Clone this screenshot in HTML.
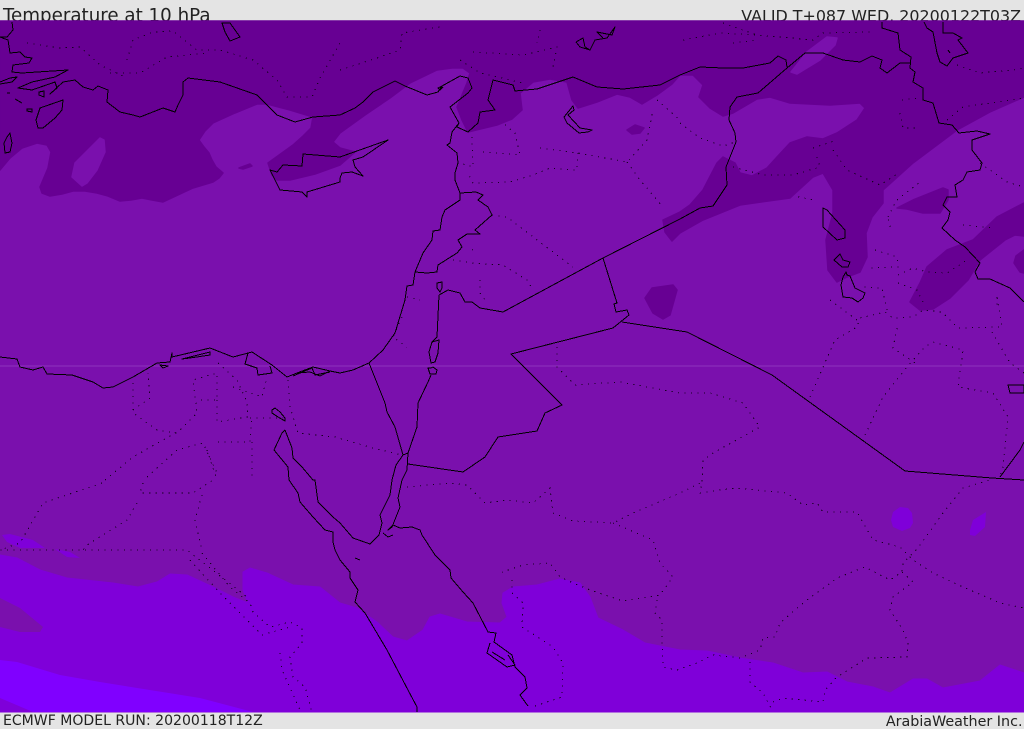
<!DOCTYPE html>
<html><head><meta charset="utf-8"><title>Temperature at 10 hPa</title>
<style>html,body{margin:0;padding:0;background:#e4e4e4;width:1024px;height:729px;overflow:hidden}svg{display:block}</style>
</head><body>
<svg width="1024" height="729" viewBox="0 0 1024 729" xmlns="http://www.w3.org/2000/svg">
<rect width="1024" height="729" fill="#e4e4e4"/>
<g font-family="'DejaVu Sans','Liberation Sans',sans-serif" fill="#222">
<text x="3" y="21.500" font-size="18.25">Temperature at 10 hPa</text>
<text x="1021" y="21.500" font-size="15.9" text-anchor="end">VALID T+087 WED. 20200122T03Z</text>
<text x="3" y="725" font-size="14.05">ECMWF MODEL RUN: 20200118T12Z</text>
<text x="1022.500" y="726" font-size="14.3" text-anchor="end">ArabiaWeather Inc.</text>
</g>
<rect x="0" y="21" width="1024" height="691" fill="#7a10ad"/>
<g fill="#670093" stroke="#670093" stroke-width="1.5" stroke-linejoin="round">
<path d="M0 170L10 158L22 148L37 143L47 145L51 152L48 168L40 187L42 193L50 196L62 194L73 191L85 191L97 193L108 196L120 201L131 200L142 198L152 200L163 202L178 195L193 188L213 182L219 178L223 173L216 167L212 160L209 153L204 147L199 140L205 131L213 123L235 113L257 104L267 104L290 110L313 117L311 128L303 136L293 145L268 163L272 175L277 180L290 180L315 174L340 165L355 152L340 148L333 142L340 133L365 115L390 98L410 83L437 70L452 68L463 68L470 73L467 83L457 107L462 120L468 132L497 125L512 119L522 110L520 93L533 82L550 79L567 82L572 100L578 108L597 102L617 94L630 97L642 104L657 95L672 84L680 75L693 75L703 85L699 97L710 108L723 116L733 113L757 99L770 97L790 103L830 105L860 103L865 108L857 120L837 133L823 139L807 137L790 143L777 157L767 168L752 176L740 173L735 163L723 157L717 163L703 190L690 205L680 212L663 220L665 232L672 241L680 233L703 220L740 205L790 198L813 177L823 173L833 190L833 213L826 240L828 270L837 282L847 277L860 272L867 257L866 233L872 217L883 203L883 190L913 163L957 130L990 112L1024 97L1024 21L0 21Z"/>
<path d="M897 208L913 200L943 188L948 190L948 200L940 213L923 213L907 209Z"/>
<path d="M910 302L920 283L927 267L947 250L973 240L997 217L1024 203L1024 236L1015 235L1005 240L980 260L968 280L950 298L933 309L920 310Z"/>
<path d="M1024 250L1016 256L1014 263L1020 272L1024 273Z"/>
<path d="M645 298L652 288L673 285L677 290L670 315L663 319L653 313Z"/>
<path d="M627 130L635 125L644 128L640 133L632 134Z"/>
<path d="M239 168L250 164L252 166L243 169Z"/>
</g>
<g fill="#7a10ad" stroke="#7a10ad" stroke-width="1.5" stroke-linejoin="round">
<path d="M100 138L104 140L105 152L97 170L87 183L82 186L72 177L75 163Z"/>
<path d="M791 72L807 52L827 37L837 38L835 45L820 60L797 74Z"/>
</g>
<path fill="#7f00d9" stroke="#7f00d9" stroke-linejoin="round" d="M0 555L17 558L40 570L67 578L113 583L138 587L157 582L170 574L187 575L213 587L233 597L248 603L243 590L243 572L250 568L267 573L293 585L320 587L340 603L357 608L377 622L393 637L407 641L423 630L430 617L440 614L467 622L500 623L507 617L502 603L503 593L513 587L537 585L560 579L580 583L590 597L598 618L623 630L645 643L680 650L707 651L740 658L773 663L803 673L827 672L847 682L873 687L890 693L913 679L927 679L943 688L980 681L1000 665L1024 673L1024 712L0 712Z"/>
<path fill="#7a10ad" d="M0 598L20 608L43 627L40 632L20 632L0 627Z"/>
<path fill="#8000ff" d="M0 660L17 662L60 675L100 682L200 698L253 712L33 712L0 698Z"/>
<g fill="#7f00d9">
<path d="M2 535L10 534L33 540L45 548L20 548L7 542Z"/>
<path d="M55 549L70 552L80 558L67 557Z"/>
<path d="M891 520L893 512L900 507L908 508L912 513L913 523L910 528L902 531L893 527Z"/>
<path d="M970 530L973 520L986 512L985 527L975 536L970 535Z"/>
</g>
<rect x="0" y="365.500" width="1024" height="1" fill="#8f33bd"/>
<g fill="none" stroke="#160020" stroke-width="1" stroke-dasharray="1.2 5.3" shape-rendering="crispEdges">
<path d="M27 43L60 48L80 47L100 65L127 78M127 60L133 40L153 32L173 31L197 50L220 50L253 60L277 80L287 97L312 97L320 78L340 43"/>
<path d="M110 73L140 73L167 57L207 53M340 70L380 57L400 50L402 33L440 27M473 52L523 55L557 47L553 67M460 60L480 73L523 83M540 30L537 43"/>
<path d="M683 40L720 33L757 35L780 37L813 40L823 33L870 32M733 43L757 40M723 23L757 35M957 65L980 73L1013 70L1024 68M902 100L920 98M900 113L903 128L920 128M947 120L963 107L1024 98"/>
<path d="M680 123L700 138L723 146L735 142M813 148L837 140M817 157L820 167M733 167L763 175L793 175L817 168M833 150L847 170L880 185L900 172M798 197L815 200M897 200L920 182M888 217L895 203M890 227L888 217M980 163L1007 182L1024 187M963 225L993 228"/>
<path d="M472 137L473 167L460 163M483 152L520 155L515 133L503 123M540 148L578 153L627 162L647 140L653 110M627 162L640 180L663 207M657 100L680 120M578 153L577 170L550 168L533 175L510 182L473 183L468 173"/>
<path d="M492 215L507 217L537 240L573 267M453 260L473 263L503 265L527 280L532 288M480 280L480 293L487 303M472 250L477 248M407 297L420 300M402 317L393 337L407 347"/>
<path d="M133 383L133 413L157 430L177 433L197 413L193 380L217 373L217 400L197 400M217 400L217 422L248 417L247 402L237 380L218 363M233 387L262 397L267 377M133 410L150 398L148 373M288 380L290 407L298 433L335 437L373 448L402 455M250 418L283 418"/>
<path d="M105 480L133 457L177 432M147 477L177 450L203 443L217 473M218 442L250 442L252 417M252 442L252 480M207 450L217 480M102 483L43 503L20 543L0 550L187 550L247 597M143 483L140 493L193 493L213 480M137 503L127 520L87 545L83 550M202 495L195 520L202 550M202 553L230 587L250 603L253 612L270 627L290 622L302 628L302 643L290 657L293 677L305 687L312 712M190 560L220 593L247 620L262 635L290 627M280 653L282 670L300 710"/>
<path d="M557 347L557 367L575 385L620 382L680 393L710 393L743 403L760 427L713 453L703 460L702 480L700 493L735 488L787 493L803 505L817 503L823 512L857 512L873 540L900 547L913 560L933 573L963 587L1000 603L1024 608"/>
<path d="M407 487L450 483L467 485L485 503L507 500L533 503L550 488L553 513L573 521L613 523L633 513L680 493L700 483M613 523L653 540L660 563L673 577L660 595L623 601L590 590L573 583L560 577L550 563L523 565L502 572M512 580L512 593L523 603L522 627L553 647L563 663L562 697L532 707M657 600L655 613L662 620L662 643L663 667L677 670L697 663L713 655L740 658L760 650L763 638L775 637L780 623L803 603L837 578L865 567L890 580L902 572L903 563L918 548L943 513L963 488L990 480"/>
<path d="M750 662L750 682L763 693L772 710M773 702L783 698L823 702L825 690L837 677L867 658L907 657L908 643L903 630L890 610L893 597L913 582L902 572"/>
<path d="M810 397L823 367L835 340L857 327L860 318L885 312L893 318L913 317L923 310L942 312L958 328L1002 327L997 297M865 435L883 397L907 367L925 347L933 342L963 350L958 387L993 393L1008 417L1003 467L1000 476M897 328L893 348L908 358L918 365M992 332L1010 363L1024 373M887 310L882 288L862 287M830 300L857 320M875 250L897 257L898 267L870 268M898 275L913 268L927 272L947 273L967 260M898 283L917 290L923 302M997 297L997 310"/>
</g>
<g fill="none" stroke="#000" stroke-width="1" stroke-linejoin="round" shape-rendering="crispEdges">
<path d="M12 22L13 30L7 37L0 37L8 40L10 53L20 52L25 57L32 58L29 63L13 65L12 72L22 73L68 70L55 77L32 82L18 88L32 90L55 82L57 88L50 94L63 82L75 80L83 87L93 90L98 86L108 90L107 102L120 112L133 115L140 117L163 108L175 112L178 105L183 95L183 82L188 78L220 82L257 95L267 105L277 115L295 122L313 117L340 115L355 108L363 102L373 92L395 81L405 86L427 95L438 92L442 86L460 76L468 78L472 88L468 93L450 107L459 123L457 127L468 132L478 123L480 112L495 110L488 100L493 80L513 85L515 91L537 89L573 77L597 87L623 89L660 85L680 75L700 67L723 68L743 68L770 63L778 56L786 60L787 67"/>
<path d="M787 68L805 53L823 53L843 60L860 62L872 56L882 60L880 68L887 73L900 63L910 63"/>
<path d="M882 22L882 28L898 33L900 50L911 57L910 68L915 72L913 82L923 88L923 100L933 103L939 123L952 125L959 133L977 131L990 134L972 140L972 150L982 163L980 170L967 172L963 180L955 185L957 197L947 197L943 205L950 212L948 220L942 228L955 240L965 247L980 263L975 272L978 279L990 279L1010 288L1024 302"/>
<path d="M924 22L927 28L933 32L937 53L940 62L947 66L953 58L968 53L958 40L962 38L953 33L943 33L943 22"/>
<path d="M503 312L603 258L680 219L700 208L713 206L727 185L726 167L730 157L736 142L735 133L729 120L730 107L737 97L758 93L787 68"/>
<path d="M459 123L452 132L450 143L447 145L457 153L458 163L455 173L455 180L460 193L476 192L483 195L478 200L488 207L492 215L475 230L480 234L467 234L458 240L462 247L457 253L438 265L437 272L427 273L415 272"/>
<path d="M460 193L460 200L445 210L442 217L440 230L433 231L432 240L423 253L415 272L413 285L407 286L405 300L395 333L383 350L369 363L353 370L340 373L330 371L313 367L297 373L287 377L272 365L252 352L233 357L210 348L172 357L172 353L170 362L157 363L133 377L113 387L103 388L93 382L72 375L47 374L43 367L33 370L20 367L17 359L0 357"/>
<path d="M182 359L210 352L210 355L190 358ZM248 353L245 364L257 368L258 375L272 373L270 366M293 376L312 368L315 375L330 372M297 373L310 372L320 376L330 371M160 365L168 366L163 368Z"/>
<path d="M272 410L275 408L280 412L285 418L285 421L278 417L272 413Z"/>
<path d="M285 430L282 433L274 450L288 467L289 480L298 493L300 502L313 517L325 530L333 532L333 542L335 550L340 560L350 572L350 578L358 590L355 602L365 613L387 650L408 690L417 707L417 712"/>
<path d="M285 430L292 448L293 458L302 467L313 480L315 480L318 502L333 517L340 523L353 538L370 544L379 535L382 523L380 515L390 495L392 480L396 465L403 455L408 453L407 470L402 480L398 498L400 507L392 527L388 530L393 525L400 528L412 527L420 530L422 535L435 555L450 570L451 578L463 592L473 603L488 632L496 633L494 642L512 655L515 667L525 677L527 688L520 695L528 706"/>
<path d="M490 643L487 653L507 667L515 665L508 655M492 652L505 660"/>
<path d="M439 295L437 337L432 342L439 340L438 353L435 362L431 363L429 352L432 342M431 368L428 368L430 374L436 374L437 370L433 367L431 368M431 375L428 382L418 403L417 427L408 453"/>
<path d="M437 283L442 282L442 288L440 292L437 288Z"/>
<path d="M439 295L448 290L460 293L465 302L472 302L480 308L503 312"/>
<path d="M603 258L617 303L614 304L616 312L627 310L629 315L613 328L511 354L562 405L545 413L537 431L498 437L485 457L463 472L408 464"/>
<path d="M369 363L385 403L387 412L395 427L403 455"/>
<path d="M622 322L687 332L772 375L905 471L992 478L1024 480M1000 477L1020 450L1024 442"/>
<path d="M63 100L62 110L55 118L43 128L38 128L36 120L40 108ZM222 23L230 23L240 37L230 41L225 32ZM10 133L12 143L10 152L5 153L4 143L7 137Z"/>
<path d="M303 154L340 157L388 140L363 157L353 160L355 167L363 176L352 172L342 173L340 178L340 182L307 192L307 197L302 192L280 190L270 170L277 172L283 165L302 166Z"/>
<path d="M576 42L583 38L585 47L590 50L595 40L607 38L615 27L612 35L597 32L603 38M576 42L580 47L590 50"/>
<path d="M564 117L573 106L574 110L568 115L580 128L592 130L588 132L579 133L567 123Z"/>
<path d="M823 208L827 210L845 230L845 238L837 240L823 227ZM834 260L840 254L843 260L850 262L848 267L842 267ZM846 272L847 275L850 276L855 288L865 293L863 298L858 302L852 298L843 297L841 285L843 277Z"/>
<path d="M1008 385L1024 385L1024 393L1010 393ZM948 50L950 53M0 82L10 78L17 77L12 82L0 84M7 93L10 93M15 99L22 103M27 111L32 112L32 109L27 109ZM39 92L44 91L44 97L39 95ZM355 558L360 560M383 533L388 537L393 535"/>
<path d="M442 86L438 88L440 90L443 87"/>
</g>
</svg>
</body></html>
